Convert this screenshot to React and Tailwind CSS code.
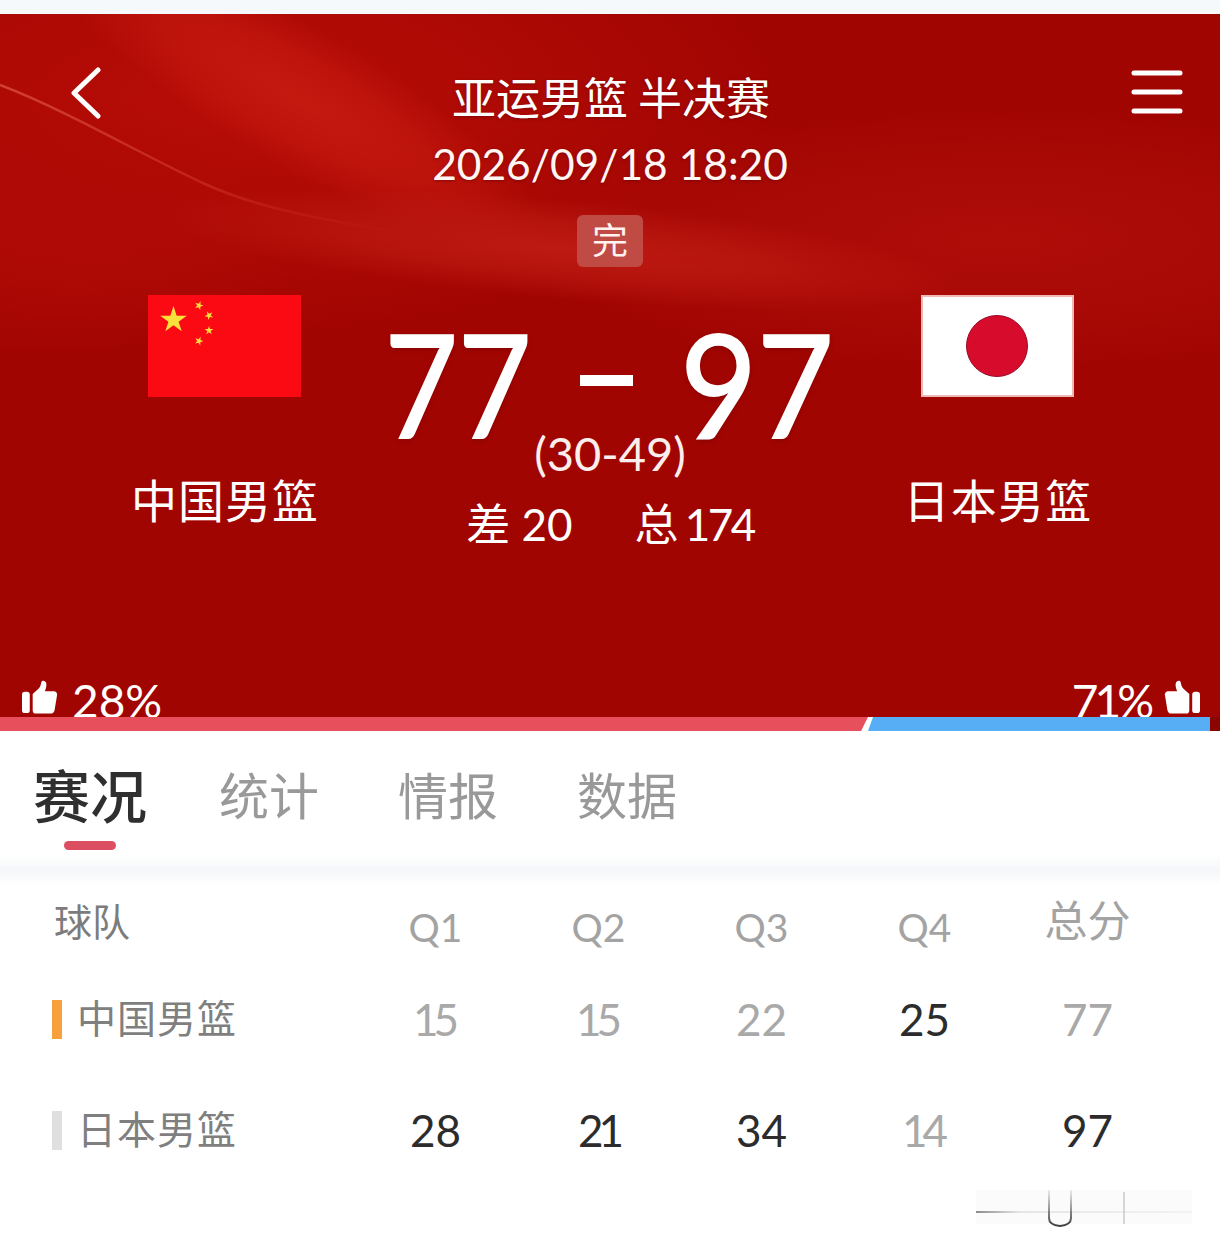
import React from "react";

const cjk = "font-['Noto_Sans_CJK_SC','Noto_Sans',sans-serif]";
const latin = "font-['Lato','Noto_Sans_CJK_SC',sans-serif]";

const quarters = ["Q1", "Q2", "Q3", "Q4", "总分"];
const rows = [
	{ name: "中国男篮", mark: "bg-[#f6a13c]", scores: [["15", 0], ["15", 0], ["22", 0], ["25", 1], ["77", 0]] },
	{ name: "日本男篮", mark: "bg-[#dfdfdf]", scores: [["28", 1], ["21", 1], ["34", 1], ["14", 0], ["97", 1]] },
];
const tabs = ["统计", "情报", "数据"];

const Star = ({ x, y, r, rotate = 0 }) => {
	const points = [];
	for (let i = 0; i < 10; i++) {
		const radius = i % 2 === 0 ? r : r * 0.382;
		const angle = ((-90 + i * 36 + rotate) * Math.PI) / 180;
		points.push(`${x + radius * Math.cos(angle)},${y + radius * Math.sin(angle)}`);
	}
	return <polygon points={points.join(" ")} fill="#f9e13c" />;
};

const ChinaFlag = () => (
	<svg width="153" height="102" viewBox="0 0 153 102" className="block">
		<rect width="153" height="102" fill="#fb0a14" />
		<Star x={25.5} y={25} r={14} />
		<Star x={51} y={10.5} r={4.6} rotate={20} />
		<Star x={61} y={20.5} r={4.6} rotate={45} />
		<Star x={61} y={35.5} r={4.6} rotate={0} />
		<Star x={51} y={46} r={4.6} rotate={20} />
	</svg>
);

const JapanFlag = () => (
	<svg width="153" height="102" viewBox="0 0 153 102" className="block">
		<rect x="1" y="1" width="151" height="100" fill="#fff" stroke="#eeb9b6" strokeWidth="2" />
		<circle cx="76" cy="51" r="30.5" fill="#d70c2d" stroke="#9a0a26" strokeWidth="1" />
	</svg>
);

const ThumbUp = ({ flip }) => (
	<svg width="37" height="35" viewBox="0 0 38 36" className={flip ? "-scale-x-100" : ""}>
		<rect x="1" y="12" width="8" height="22" rx="3" fill="#fff" />
		<path
			d="M12 14.5 L18 9 C20 7 20.5 4 21 2 C21.5 0 25.5 0.5 26 3.5 C26.4 6 25.5 9 24.5 11.5 L33.5 11.5 C36.5 11.5 37.5 14 37 16 L34.5 31 C34 33.5 32.5 34.5 30.5 34.5 L15 34.5 C13 34.5 12 33 12 31 Z"
			fill="#fff"
		/>
	</svg>
);

const Glow = ({ id, color }) => (
	<radialGradient id={id}>
		<stop offset="0" stopColor={color} />
		<stop offset="0.55" stopColor={color} stopOpacity="0.6" />
		<stop offset="1" stopColor={color} stopOpacity="0" />
	</radialGradient>
);

// wavy red backdrop of the match header
const HeroBackdrop = () => (
	<svg className="absolute inset-0" width="1220" height="703" viewBox="0 0 1220 703">
		<defs>
			<Glow id="top" color="#b60c06" />
			<Glow id="sheen" color="#c4190f" />
			<Glow id="band" color="#bd1a12" />
			<Glow id="right" color="#ae0d08" />
			<Glow id="left" color="#b00a06" />
			<linearGradient id="line" x1="0" y1="0" x2="1" y2="0">
				<stop offset="0" stopColor="#e0584d" stopOpacity="0.7" />
				<stop offset="0.5" stopColor="#d9463b" stopOpacity="0.4" />
				<stop offset="1" stopColor="#c9251c" stopOpacity="0" />
			</linearGradient>
		</defs>
		<rect width="1220" height="703" fill="#a10502" />
		<ellipse cx="1000" cy="225" rx="480" ry="130" fill="url(#right)" />
		<ellipse cx="220" cy="90" rx="560" ry="230" fill="url(#top)" />
		<ellipse cx="60" cy="210" rx="260" ry="130" fill="url(#left)" />
		<ellipse cx="300" cy="85" rx="280" ry="70" fill="url(#sheen)" transform="rotate(30 300 85)" />
		<ellipse cx="560" cy="235" rx="400" ry="50" fill="url(#band)" transform="rotate(5 560 235)" />
		<path d="M0 71 C70 98 140 140 205 170 C260 195 320 205 420 222" stroke="url(#line)" strokeWidth="2.5" fill="none" />
	</svg>
);

const App = () => {
	return (
		<div className={`w-[1220px] h-[1252px] overflow-hidden bg-white ${cjk}`}>
			<div className="h-[14px] bg-[#f6f9fb]" />

			<div className="relative h-[703px] bg-[#a10502]">
				<HeroBackdrop />

				<div className="relative flex flex-col h-full text-white">
					<div className="flex items-start justify-between pt-[53px] pl-[70px] pr-[37px] h-[56px]">
						<svg width="32" height="54" viewBox="0 0 32 54" fill="none" stroke="#fff" strokeWidth="5" strokeLinecap="round" strokeLinejoin="round">
							<path d="M28 3 L4 26 L28 49" />
						</svg>
						<svg width="52" height="46" viewBox="0 0 52 46" stroke="#fff" strokeWidth="5" strokeLinecap="round" className="mt-[2px]">
							<path d="M3 4 H49 M3 23 H49 M3 42 H49" />
						</svg>
					</div>

					<div className="flex flex-col items-center">
						<h1 className="text-[44px] leading-[60px] -mt-[4px] pl-[2px] [text-shadow:0_1px_3px_rgba(90,0,0,0.5)]">亚运男篮 半决赛</h1>
						<p className={`${latin} text-[42.5px] leading-[60px] mt-[8px] text-[#fff6f4] [text-shadow:0_1px_3px_rgba(90,0,0,0.5)]`}>2026/09/18 18:20</p>
						<span className="flex items-center justify-center w-[66px] h-[52px] mt-[21px] pb-[6px] rounded-md bg-[#c04a44] text-[36px] text-[#fff2ef]">完</span>
					</div>

					<div className="grid grid-cols-[448px_324px_448px] mt-[28px]">
						<div className="flex flex-col items-center">
							<ChinaFlag />
							<p className="mt-[71px] text-[46px] leading-[60px] tracking-[1px] pl-[2px]">中国男篮</p>
						</div>
						<div className="flex flex-col items-center">
							<div className={`${latin} flex items-center w-[460px] -mx-[68px] pl-[3px] h-[136px] mt-[20px] text-[144px] leading-none whitespace-nowrap [-webkit-text-stroke:2px_white] [text-shadow:0_2px_6px_rgba(90,0,0,0.45)]`}>
								<span className="flex justify-center w-[150px] scale-x-[0.88]">77</span>
								<span className="w-[53px] h-[11px] ml-[47px] mr-[49px] -mt-[6px] bg-white shrink-0" />
								<span className="flex justify-center w-[150px] scale-x-[0.92]">97</span>
							</div>
							<p className={`${latin} text-[47px] leading-[50px] -mt-[23px] text-[#fbeeec]`}>(30-49)</p>
							<div className={`flex gap-[62px] text-[44px] leading-[56px] mt-[18px] ${latin}`}>
								<span>差 20</span>
								<span className="tracking-[-2.5px]">总 174</span>
							</div>
						</div>
						<div className="flex flex-col items-center pl-[2px]">
							<JapanFlag />
							<p className="mt-[71px] text-[46px] leading-[60px] tracking-[1.3px] pl-[2px]">日本男篮</p>
						</div>
					</div>

					<div className="mt-auto flex items-end justify-between pl-[21px] pr-[19px]">
						<div className={`flex items-end gap-[14px] ${latin}`}>
							<div className="mb-[2px]"><ThumbUp /></div>
							<span className="text-[46px] leading-[32px]">28%</span>
						</div>
						<div className={`flex items-end gap-[14px] ${latin}`}>
							<span className="text-[46px] leading-[32px] tracking-[-4px]">71%</span>
							<div className="mb-[2px]"><ThumbUp flip /></div>
						</div>
					</div>
				</div>
			</div>

			<div className="flex h-[14px] bg-white">
				<div className="w-[868px] bg-[#e84f5d] [clip-path:polygon(0_0,100%_0,99.2%_100%,0_100%)]" />
				<div className="w-[342px] bg-[#57aef5] [clip-path:polygon(5px_0,100%_0,100%_100%,0_100%)]" />
				<div className="w-[10px] bg-[#8a0402]" />
			</div>

			<div className="flex items-start pl-[33px] pt-[28px] h-[124px]">
				<div className="flex flex-col items-center w-[114px]">
					<span className="text-[57px] leading-[68px] font-medium text-[#2f2f2f]">赛况</span>
					<span className="w-[52px] h-[9px] mt-[14px] rounded-full bg-[#dc4f62]" />
				</div>
				<div className="flex gap-[79px] ml-[72px] mt-[2px] text-[50px] leading-[64px] text-[#999]">
					{tabs.map((tab) => (
						<span key={tab}>{tab}</span>
					))}
				</div>
			</div>

			<div className="h-[30px] bg-gradient-to-b from-white via-[#f4f6f9] to-white" />

			<div className="grid grid-cols-[354px_repeat(5,163px)] items-center">
				<div className="pl-[54px] text-[38px] leading-[60px] text-[#7c7c7c] translate-y-[5px]">球队</div>
				{quarters.map((q) => (
					<div
						key={q}
						className={`text-center text-[#a3a3a3] ${q === "总分" ? "text-[43px] leading-[60px] translate-y-[3px]" : `text-[39px] leading-[60px] translate-y-[12px] ${latin}`}`}
					>
						{q}
					</div>
				))}
			</div>

			<div className="mt-[44px] flex flex-col gap-[51px]">
				{rows.map((row) => (
					<div key={row.name} className="grid grid-cols-[354px_repeat(5,163px)] items-center h-[60px]">
						<div className="flex items-center pl-[52px] gap-[15px]">
							<span className={`w-[10px] h-[39px] ${row.mark}`} />
							<span className="text-[39px] leading-[60px] tracking-[1px] text-[#7f7f7f] -mt-[6px]">{row.name}</span>
						</div>
						{row.scores.map(([value, strong], i) => (
							<div
								key={i}
								className={`text-center text-[44px] leading-[60px] ${latin} ${value.includes("1") ? "tracking-[-5px]" : ""} ${value.startsWith("1") ? "pr-[4px]" : ""} ${strong ? "text-[#2c2c2c]" : "text-[#a9a9a9]"}`}
							>
								{value}
							</div>
						))}
					</div>
				))}
			</div>

			<div className="flex justify-end pr-[28px] mt-[30px]">
				<svg width="216" height="38" viewBox="0 0 216 38">
					<defs>
						<linearGradient id="smudge" x1="0" y1="0" x2="0" y2="1">
							<stop offset="0" stopColor="#555" stopOpacity="0.1" />
							<stop offset="1" stopColor="#333" stopOpacity="0.95" />
						</linearGradient>
						<linearGradient id="rule" gradientUnits="userSpaceOnUse" x1="0" y1="0" x2="216" y2="0">
							<stop offset="0" stopColor="#666" />
							<stop offset="0.2" stopColor="#ddd" />
							<stop offset="1" stopColor="#f0f0f0" />
						</linearGradient>
					</defs>
					<rect width="216" height="34" fill="#fbfbfb" />
					<path d="M0 22 H216" stroke="url(#rule)" strokeWidth="1.5" />
					<path d="M73 0 V28 Q73 35 84 36 Q95 35 95 28 V0" fill="none" stroke="url(#smudge)" strokeWidth="2" />
					<path d="M148 2 V34" stroke="#c8c8c8" strokeWidth="1.5" />
				</svg>
			</div>
		</div>
	);
};

export default App;
